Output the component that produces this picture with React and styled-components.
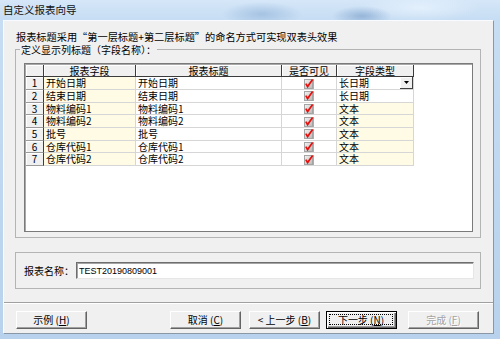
import React from "react";
import styled, { createGlobalStyle } from "styled-components";

const GlobalStyle = createGlobalStyle`
  html, body { margin: 0; padding: 0; }
  body {
    width: 500px;
    height: 339px;
    overflow: hidden;
    font-family: "Noto Sans CJK SC", "Liberation Sans", sans-serif;
    font-size: 10px;
    color: #000;
  }
  * { box-sizing: border-box; }
`;

const columns = [
  { key: "field", title: "报表字段", w: 92 },
  { key: "caption", title: "报表标题", w: 146 },
  { key: "visible", title: "是否可见", w: 55 },
  { key: "type", title: "字段类型", w: 77 },
];

const rows = [
  { field: "开始日期", caption: "开始日期", type: "长日期", combo: true },
  { field: "结束日期", caption: "结束日期", type: "长日期" },
  { field: "物料编码1", caption: "物料编码1", type: "文本" },
  { field: "物料编码2", caption: "物料编码2", type: "文本" },
  { field: "批号", caption: "批号", type: "文本" },
  { field: "仓库代码1", caption: "仓库代码1", type: "文本" },
  { field: "仓库代码2", caption: "仓库代码2", type: "文本" },
];

function CheckMark() {
  return (
    <svg width="11" height="11" viewBox="0 0 11 11">
      <defs>
        <linearGradient id="cbg" x1="0" y1="0" x2="1" y2="1">
          <stop offset="0" stopColor="#f4f4f4" />
          <stop offset="1" stopColor="#b8b8b8" />
        </linearGradient>
      </defs>
      <rect x="0.5" y="1.5" width="8" height="9" fill="url(#cbg)" stroke="#a4a4a4" />
      <line x1="9.5" y1="1" x2="9.5" y2="11" stroke="#f0a040" strokeWidth="1" />
      <path d="M1.8 5.6 L3.6 8.6 L8.6 1.6" fill="none" stroke="#e8100c" strokeWidth="1.7" />
    </svg>
  );
}

function Mn({ children }) {
  return <u>{children}</u>;
}

export default function App() {
  return (
    <>
      <GlobalStyle />
      <Window>
        <TitleBar>自定义报表向导</TitleBar>
        <Client>
          <Intro>报表标题采用“第一层标题+第二层标题”的命名方式可实现双表头效果</Intro>
          <GroupBox>
            <Legend>定义显示列标题（字段名称）：</Legend>
            <Grid>
              <Row $h={12.3}>
                <HeadCell $w={18} />
                {columns.map((c) => (
                  <HeadCell key={c.key} $w={c.w}>
                    {c.title}
                  </HeadCell>
                ))}
              </Row>
              {rows.map((r, i) => (
                <Row key={i} $h={12.7}>
                  <HeadCell $w={18} $num>
                    {i + 1}
                  </HeadCell>
                  <Cell $w={92} $yellow>
                    {r.field}
                  </Cell>
                  <Cell $w={146}>{r.caption}</Cell>
                  <Cell $w={55} $center>
                    <CheckMark />
                  </Cell>
                  <Cell $w={77} $yellow={i >= 2} $combo={r.combo}>
                    <span>{r.type}</span>
                    {r.combo && (
                      <DropButton>
                        <svg width="5" height="3" viewBox="0 0 5 3">
                          <path d="M0 0 H5 L2.5 3 Z" fill="#000" />
                        </svg>
                      </DropButton>
                    )}
                  </Cell>
                </Row>
              ))}
            </Grid>
          </GroupBox>
          <NameBox>
            <NameLabel>报表名称：</NameLabel>
            <NameInput readOnly value="TEST20190809001" />
          </NameBox>
          <Separator />
          <ButtonRow>
            <Button $ml={0}>
              示例 (<Mn>H</Mn>)
            </Button>
            <Button $ml={83}>
              取消 (<Mn>C</Mn>)
            </Button>
            <Button $ml={8}>
              &lt; 上一步 (<Mn>B</Mn>)
            </Button>
            <Button $ml={6} $default>
              <Focus>
                下一步 (<Mn>N</Mn>)
              </Focus>
            </Button>
            <Button $ml={11} disabled>
              完成 (<Mn>F</Mn>)
            </Button>
          </ButtonRow>
        </Client>
      </Window>
    </>
  );
}

const Window = styled.div`
  width: 500px;
  height: 339px;
  display: flex;
  flex-direction: column;
  padding: 0 6px 5px 3px;
  background:
    radial-gradient(ellipse 40px 12px at 262px 14px, rgba(120, 160, 205, 0.45), transparent),
    radial-gradient(ellipse 30px 10px at 362px 16px, rgba(100, 140, 190, 0.5), transparent),
    radial-gradient(ellipse 60px 14px at 420px 8px, rgba(235, 245, 255, 0.7), transparent),
    linear-gradient(to bottom, #d5e7f8 0, #c6ddf3 20px, #b8d2ed 100%);
`;

const TitleBar = styled.div`
  height: 20px;
  line-height: 20px;
  font-size: 10.5px;
  color: #111;
`;

const Client = styled.div`
  flex: 1;
  display: flex;
  flex-direction: column;
  background: #f0f0f0;
  border: 1px solid;
  border-color: #f8fbff #8a97a6 #8a97a6 #f8fbff;
`;

const Intro = styled.div`
  padding: 9px 0 0 12px;
  line-height: 13px;
  height: 22px;
  font-size: 10.2px;
  white-space: nowrap;
`;

const GroupBox = styled.fieldset`
  margin: 0 0 0 11px;
  width: 466px;
  min-width: 0;
  border: 1px solid #b4b4b4;
  padding: 7px 7px 5px 8px;
`;

const Legend = styled.legend`
  margin-left: -4px;
  padding: 0 1px;
  line-height: 13px;
  font-size: 10px;
`;

const Grid = styled.div`
  height: 169px;
  background: #fff;
  border: 1px solid #7a7a7a;
  padding: 1px;
  box-shadow: inset 1px 1px 0 #a8a8a8;
  display: flex;
  flex-direction: column;
`;

const Row = styled.div`
  display: flex;
  height: ${(p) => p.$h}px;
  flex: none;
`;

const HeadCell = styled.div`
  width: ${(p) => p.$w}px;
  flex: none;
  display: flex;
  align-items: center;
  justify-content: center;
  background: #f0f0f0;
  border-right: 1px solid #3c3c3c;
  border-bottom: 1px solid ${(p) => (p.$num ? "#9a9a9a" : "#3c3c3c")};
  box-shadow: inset 1px 1px 0 #fff;
  font-size: 10px;
  line-height: 12px;
  white-space: nowrap;
`;

const Cell = styled.div`
  width: ${(p) => p.$w}px;
  flex: none;
  display: flex;
  align-items: center;
  justify-content: ${(p) => (p.$center ? "center" : p.$combo ? "space-between" : "flex-start")};
  padding-left: ${(p) => (p.$center ? 0 : 2)}px;
  background: ${(p) => (p.$yellow ? "#fffbe4" : "#fff")};
  border-right: 1px solid #d6d6d6;
  border-bottom: 1px solid #d6d6d6;
  font-size: 10px;
  line-height: 12px;
  white-space: nowrap;
`;

const DropButton = styled.div`
  width: 13px;
  height: 100%;
  display: flex;
  align-items: center;
  justify-content: center;
  background: #f0f0f0;
  border-right: 1px solid #404040;
  border-bottom: 1px solid #404040;
  box-shadow: inset 1px 1px 0 #fff;
`;

const NameBox = styled.div`
  margin: 14px 0 0 11px;
  width: 466px;
  height: 37px;
  border: 1px solid #b4b4b4;
  display: flex;
  align-items: center;
  padding: 0 6px 0 8px;
`;

const NameLabel = styled.span`
  width: 52px;
  flex: none;
  font-size: 10px;
  white-space: nowrap;
`;

const NameInput = styled.input`
  flex: 1;
  height: 17px;
  margin: 0;
  padding: 0 0 0 2px;
  border: 1px solid;
  border-color: #6e6e6e #e6e6e6 #e6e6e6 #6e6e6e;
  box-shadow: inset 1px 1px 0 #a4a4a4;
  background: #fff;
  font-family: "Liberation Sans", sans-serif;
  font-size: 9px;
  color: #000;
  outline: none;
`;

const Separator = styled.div`
  margin-top: 13px;
  border-top: 1px solid #a0a0a0;
  border-bottom: 1px solid #fff;
`;

const ButtonRow = styled.div`
  display: flex;
  margin-top: 7px;
  padding-left: 12px;
`;

const Button = styled.button`
  width: 71px;
  height: 18px;
  margin: 0 0 0 ${(p) => p.$ml}px;
  padding: 0;
  display: flex;
  align-items: center;
  justify-content: center;
  font-family: "Noto Sans CJK SC", "Liberation Sans", sans-serif;
  font-size: 10px;
  line-height: 12px;
  color: #000;
  background: #f0f0f0;
  border: 1px solid;
  border-color: ${(p) => (p.$default ? "#000" : "#fff #646464 #646464 #fff")};
  box-shadow: ${(p) =>
    p.$default
      ? "inset 1px 1px 0 #fff, inset -1px -1px 0 #646464, inset -2px -2px 0 #a0a0a0"
      : "inset -1px -1px 0 #a0a0a0"};
  white-space: nowrap;

  &:disabled {
    color: #a3a3a3;
    text-shadow: 1px 1px 0 #fff;
  }

  u {
    text-decoration: underline;
  }
`;

const Focus = styled.span`
  flex: 1;
  align-self: stretch;
  margin: 2px 3px 3px 2px;
  border: 1px dotted #000;
  display: flex;
  align-items: center;
  justify-content: center;
`;
